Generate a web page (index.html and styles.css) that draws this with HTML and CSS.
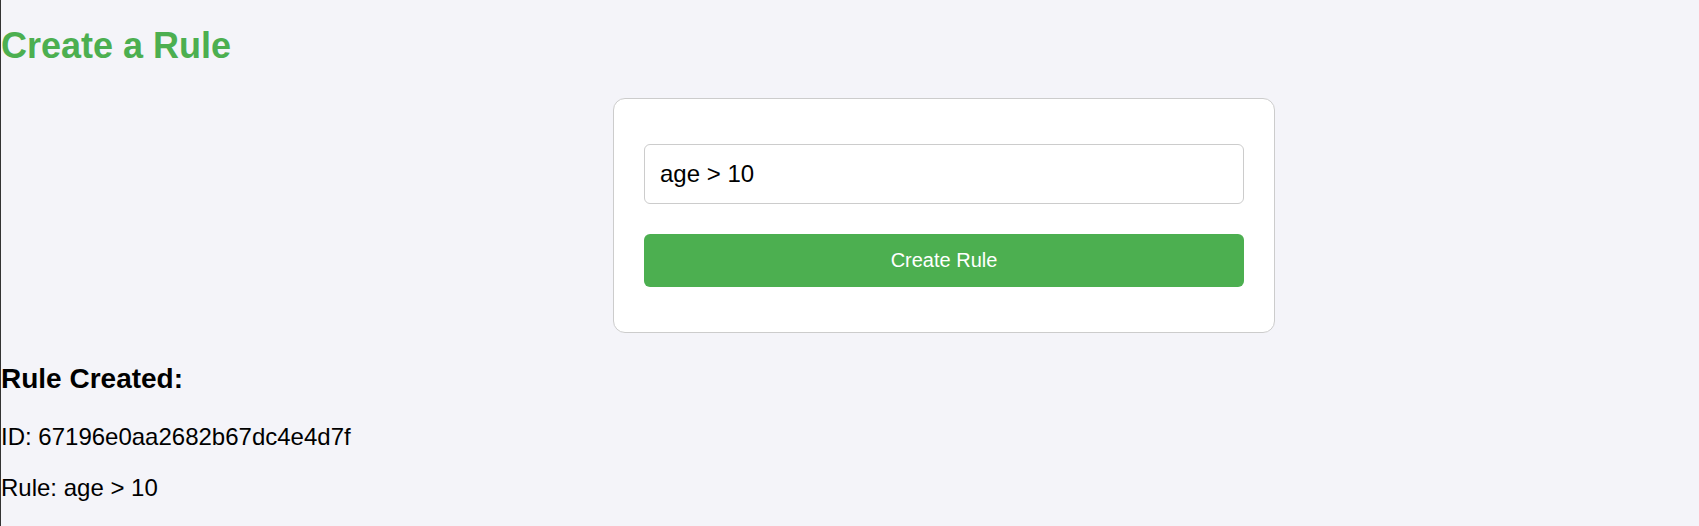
FILE: index.html
```html
<!DOCTYPE html>
<html lang="en">
<head>
<meta charset="utf-8">
<title>Create a Rule</title>
<link rel="stylesheet" href="styles.css">
</head>
<body>
  <h2 class="title">Create a Rule</h2>
  <form class="card">
    <input class="rule-input" type="text" value="age &gt; 10">
    <button class="btn" type="button">Create Rule</button>
  </form>
  <h3 class="result-title">Rule Created:</h3>
  <p class="result-line">ID: 67196e0aa2682b67dc4e4d7f</p>
  <p class="result-line">Rule: age &gt; 10</p>
</body>
</html>
```
FILE: styles.css
```css
html, body {
  height: 100%;
}
body {
  margin: 0;
  border-left: 1px solid #333;
  background: #f4f4f9;
  font-family: "Liberation Sans", Arial, sans-serif;
  font-size: 24px;
  color: #000;
  overflow: hidden;
}
.title {
  margin: 25px 0 31px;
  font-size: 36px;
  font-weight: bold;
  color: #4caf50;
}
.card {
  box-sizing: border-box;
  width: 662px;
  margin: 0 0 0 612px;
  padding: 30px;
  background: #fff;
  border: 1px solid #ccc;
  border-radius: 12px;
}
.rule-input {
  display: block;
  box-sizing: border-box;
  width: 100%;
  height: 60px;
  margin: 15px 0 30px;
  padding: 15px;
  border: 1px solid #ccc;
  border-radius: 6px;
  font-family: "Liberation Sans", Arial, sans-serif;
  font-size: 24px;
  color: #000;
  outline: none;
}
.btn {
  display: block;
  box-sizing: border-box;
  width: 100%;
  height: 53px;
  margin: 0 0 15px;
  padding: 15px;
  border: none;
  border-radius: 6px;
  background: #4caf50;
  color: #fff;
  font-family: "Liberation Sans", Arial, sans-serif;
  font-size: 20px;
}
.result-title {
  margin: 30px 0 28px;
  font-size: 28px;
  font-weight: bold;
}
.result-line {
  margin: 0 0 23px;
}
```
